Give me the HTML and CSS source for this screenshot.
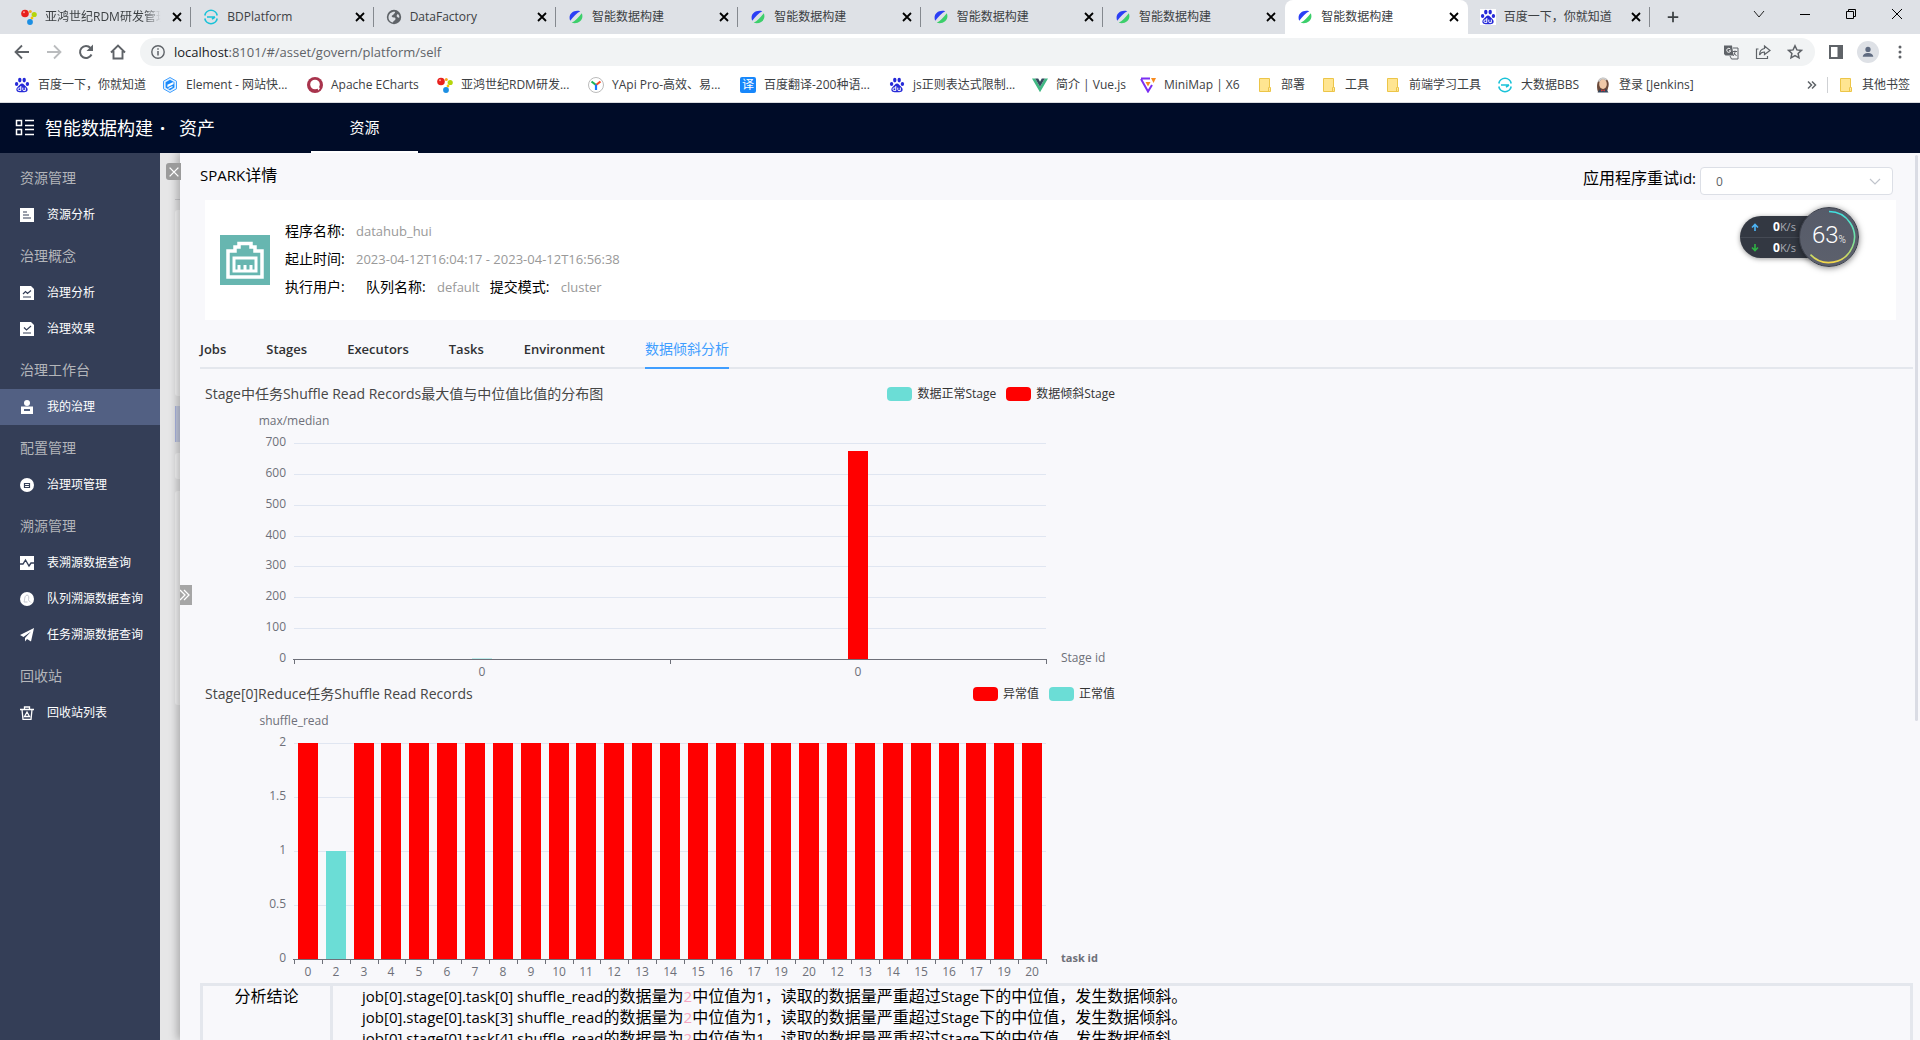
FILE: index.html
```html
<!DOCTYPE html>
<html lang="zh-CN">
<head>
<meta charset="utf-8">
<title>智能数据构建</title>
<link rel="stylesheet" href="styles.css">
</head>
<body>
<svg class="sprite" aria-hidden="true">
  <symbol id="i-close" viewBox="0 0 16 16"><path d="M4 4l8 8M12 4l-8 8" stroke="currentColor" stroke-width="1.800" fill="none"/></symbol>
  <symbol id="i-rdm" viewBox="0 0 16 16"><circle cx="4" cy="4.500" r="3.800" fill="#e8201c"/><circle cx="3" cy="3.300" r="1" fill="#f99"/><circle cx="9.300" cy="2.600" r="1.500" fill="#f5a623"/><circle cx="13.200" cy="5.500" r="2.600" fill="#b5d50b"/><circle cx="11" cy="9" r="1.400" fill="#f5c400"/><circle cx="9" cy="13" r="2.900" fill="#1c8fe3"/></symbol>
  <symbol id="i-bd" viewBox="0 0 16 16"><path d="M1.800 6.500a6.300 6.300 0 0 1 12.400 0M1.800 9.500a6.300 6.300 0 0 0 12.400 0" fill="none" stroke="#19c2d8" stroke-width="1.600"/><path d="M4 8h8M9 10.200L12 8" stroke="#19c2d8" stroke-width="1.600" fill="none"/></symbol>
  <symbol id="i-globe" viewBox="0 0 16 16"><circle cx="8" cy="8" r="7.200" fill="#5f6368"/><path d="M2.500 8.500C2.500 5 5.500 2.500 9 2.800 9.500 4 8 4.500 7.500 5.500S5 6.500 6 7.800s3.500 0 3.500 2-2 1.500-2.500 3.700C4.500 13.300 2.500 11 2.500 8.500zM11.500 5c1.500.5 2 2 1.900 3.500-1.400.5-2.400-.5-2.900-1.500z" fill="#dee1e6"/></symbol>
  <symbol id="i-smart" viewBox="0 0 16 16"><path d="M2.200 11.800C-.5 5 6 .3 12.300 2.300 9 4 5.500 7.500 2.200 11.800z" fill="#2b3ff5"/><path d="M13.800 4.200C16.500 11 10 15.700 3.700 13.700 7 12 10.500 8.500 13.800 4.200z" fill="#3ccf6b"/></symbol>
  <symbol id="i-paw" viewBox="0 0 16 16"><g fill="#2529d8"><ellipse cx="2.600" cy="7" rx="1.700" ry="2.100"/><ellipse cx="5.800" cy="3.100" rx="1.700" ry="2.300"/><ellipse cx="10.200" cy="3.100" rx="1.700" ry="2.300"/><ellipse cx="13.400" cy="7" rx="1.700" ry="2.100"/><path d="M8 6.500c1.700 0 2.300 1.500 3.500 2.600 1.700 1.600 2.500 2.700 2 4.500-.6 2.200-3.400 1.600-5.500 1.600s-4.900.6-5.500-1.600c-.5-1.800.3-2.900 2-4.500C5.700 8 6.300 6.500 8 6.500z"/></g><path d="M6.800 9v4.500H5.200a1.300 1.300 0 010-2.600h1.600M8.800 10.600v2.100q0 .9 1 .9h1.500v-3" stroke="#fff" fill="none"/></symbol>
  <symbol id="i-element" viewBox="0 0 16 16"><path d="M8 .5l6.500 3.700v7.600L8 15.500 1.500 11.800V4.200z" fill="#e1f1ff" stroke="#409eff"/><path d="M8 2.800l4.400 2.500v5.300L8 13.200l-4.400-2.600V5.300z" fill="#1989fa"/><path d="M11.500 5.500L6 8.200v1l5.500-2.700M10.500 9.500L6.500 11.500" stroke="#fff" stroke-width="1.200" fill="none"/></symbol>
  <symbol id="i-echarts" viewBox="0 0 16 16"><circle cx="8" cy="8" r="8" fill="#a8334c"/><circle cx="8" cy="7.500" r="4.800" fill="#fff"/><path d="M8.500 8l3 5.500L13 11z" fill="#fff"/></symbol>
  <symbol id="i-yapi" viewBox="0 0 16 16"><circle cx="8" cy="8" r="7.500" fill="#fff" stroke="#bbb"/><path d="M3.500 4.500L8 8" stroke="#1bb35b" stroke-width="2.200"/><path d="M12.500 4.500L8 8" stroke="#f44c2f" stroke-width="2.200"/><path d="M8 7.500v5.500" stroke="#1677ff" stroke-width="2.200"/></symbol>
  <symbol id="i-vue" viewBox="0 0 16 16"><path d="M0 1.500h3.200L8 9.800l4.800-8.300H16L8 15.300z" fill="#41b883"/><path d="M3.200 1.500h3L8 4.700l1.800-3.200h3L8 9.800z" fill="#34495e"/></symbol>
  <symbol id="i-x6" viewBox="0 0 16 16"><path d="M1 1.500h9M1 2l7 12.500L12 8" stroke="#7b2ff2" stroke-width="2" fill="none"/><path d="M5.500 5h5L8 9.500z" fill="#f78b1f"/><path d="M11 1h5l-2.500 5z" fill="#f78b1f"/></symbol>
  <symbol id="i-folder" viewBox="0 0 16 16"><path d="M2.500 1.500h10v9h1v4h-11zM12.500 10.500h-1v4" fill="#ffe591" stroke="#ecc548"/></symbol>
  <symbol id="i-jenkins" viewBox="0 0 16 16"><path d="M3 15c-2-6-1-14 5-14 5 0 7 5 5 10l-1 4z" fill="#6b4a3a"/><ellipse cx="8" cy="7" rx="3.800" ry="5" fill="#f0c9a8"/><path d="M3.500 4.500Q7-1 11.500 3" stroke="#ccc" stroke-width="2" fill="none"/><path d="M2.500 15.500L5 12l3 1.500 3-1.500 2.500 3.500z" fill="#34475c"/><path d="M6 12.500l4 2v-2l-4 2z" fill="#d33"/></symbol>
</svg>

<header class="browser">
  <div class="tabstrip">
    <nav class="tabs" aria-label="标签页">
      <div class="tab"><svg class="fav"><use href="#i-rdm"/></svg><span class="tab-title fade">亚鸿世纪RDM研发管理系统</span><button class="tab-x" aria-label="关闭"><svg><use href="#i-close"/></svg></button></div>
      <div class="tab"><svg class="fav"><use href="#i-bd"/></svg><span class="tab-title">BDPlatform</span><button class="tab-x" aria-label="关闭"><svg><use href="#i-close"/></svg></button></div>
      <div class="tab"><svg class="fav"><use href="#i-globe"/></svg><span class="tab-title">DataFactory</span><button class="tab-x" aria-label="关闭"><svg><use href="#i-close"/></svg></button></div>
      <div class="tab"><svg class="fav"><use href="#i-smart"/></svg><span class="tab-title">智能数据构建</span><button class="tab-x" aria-label="关闭"><svg><use href="#i-close"/></svg></button></div>
      <div class="tab"><svg class="fav"><use href="#i-smart"/></svg><span class="tab-title">智能数据构建</span><button class="tab-x" aria-label="关闭"><svg><use href="#i-close"/></svg></button></div>
      <div class="tab"><svg class="fav"><use href="#i-smart"/></svg><span class="tab-title">智能数据构建</span><button class="tab-x" aria-label="关闭"><svg><use href="#i-close"/></svg></button></div>
      <div class="tab before-active"><svg class="fav"><use href="#i-smart"/></svg><span class="tab-title">智能数据构建</span><button class="tab-x" aria-label="关闭"><svg><use href="#i-close"/></svg></button></div>
      <div class="tab active"><svg class="fav"><use href="#i-smart"/></svg><span class="tab-title">智能数据构建</span><button class="tab-x" aria-label="关闭"><svg><use href="#i-close"/></svg></button></div>
      <div class="tab"><svg class="fav white"><use href="#i-paw"/></svg><span class="tab-title">百度一下，你就知道</span><button class="tab-x" aria-label="关闭"><svg><use href="#i-close"/></svg></button></div>
    </nav>
    <button class="new-tab" aria-label="新标签页"><svg viewBox="0 0 16 16"><path d="M8 2v12M2 8h12" stroke="#3c4043" stroke-width="2"/></svg></button>
    <div class="window-buttons">
      <button aria-label="搜索标签页"><svg viewBox="0 0 12 12"><path d="M1 3l5 6 5-6" stroke="#222" fill="none"/></svg></button>
      <button aria-label="最小化"><svg viewBox="0 0 12 12"><path d="M1 6.500h10" stroke="#000"/></svg></button>
      <button aria-label="还原"><svg viewBox="0 0 12 12"><path d="M1.500 3.500h7v7h-7zM3.500 3.500v-2h7v7h-2" stroke="#000" fill="none"/></svg></button>
      <button aria-label="关闭窗口"><svg viewBox="0 0 12 12"><path d="M1 1l10 10M11 1L1 11" stroke="#000" fill="none"/></svg></button>
    </div>
  </div>
  <div class="toolbar">
    <button aria-label="后退"><svg viewBox="0 0 16 16"><path d="M15 8H2M8 1.500L1.500 8 8 14.500" stroke="#5f6368" stroke-width="1.800" fill="none"/></svg></button>
    <button aria-label="前进"><svg viewBox="0 0 16 16"><path d="M1 8h13M8 1.500L14.500 8 8 14.500" stroke="#babcbe" stroke-width="1.800" fill="none"/></svg></button>
    <button aria-label="重新加载"><svg viewBox="0 0 16 16"><path d="M13.500 10.500A6 6 0 1 1 12.500 4" stroke="#5f6368" stroke-width="2" fill="none"/><path d="M15 .5v6.500H8.500z" fill="#5f6368"/></svg></button>
    <button aria-label="主页"><svg viewBox="0 0 16 16"><path d="M3.500 7v7.500h9V7M1 8.500L8 1.500l7 7" stroke="#5f6368" stroke-width="1.900" fill="none"/></svg></button>
    <div class="omnibox">
      <svg class="s14" viewBox="0 0 14 14"><circle cx="7" cy="7" r="6.200" stroke="#5f6368" stroke-width="1.400" fill="none"/><path d="M7 6v4.500M7 3.300v1.500" stroke="#5f6368" stroke-width="1.500"/></svg>
      <span class="url">localhost<span>:8101/#/asset/govern/platform/self</span></span>
      <button aria-label="翻译"><svg viewBox="0 0 16 16"><path d="M1 1.500h8l1.500 10H2.500L1 10z" fill="#5f6368"/><path d="M10 4h5v11H8.500L7 12M10 7.500h4M12 6.500v1c0 2-1 3.500-2 4.500M11 9l2.500 3" stroke="#5f6368" fill="none"/><path d="M7.500 5.300A2 2 0 1 0 7.700 6.800H6" stroke="#fff" fill="none"/></svg></button>
      <button aria-label="分享"><svg viewBox="0 0 16 16"><path d="M3.500 5H1.500v9.500h11V12" stroke="#5f6368" stroke-width="1.200" fill="none"/><path d="M9.500 2l5.500 4.500-5.500 4V8C7 8 5.500 9 4.500 11c0-3.500 2-6 5-6.500z" stroke="#5f6368" stroke-width="1.200" fill="none"/></svg></button>
      <button aria-label="收藏"><svg viewBox="0 0 16 16"><path d="M8 1.800l1.900 4.100 4.500.5-3.300 3 .9 4.400L8 11.600l-4 2.200.9-4.400-3.300-3 4.500-.5z" stroke="#5f6368" stroke-width="1.500" fill="none"/></svg></button>
    </div>
    <button aria-label="侧边栏"><svg viewBox="0 0 16 16"><path d="M2 2h12v12H2z" stroke="#5f6368" stroke-width="2" fill="none"/><path d="M9.500 2H14v12H9.500z" fill="#5f6368"/></svg></button>
    <button class="avatar" aria-label="用户"><svg viewBox="0 0 16 16"><circle cx="8" cy="5" r="3" fill="#5f6b80"/><path d="M2 13.500c0-6 12-6 12 0z" fill="#5f6b80"/></svg></button>
    <button aria-label="菜单"><svg viewBox="0 0 16 16"><circle cx="8" cy="3" r="1.500" fill="#5f6368"/><circle cx="8" cy="8" r="1.500" fill="#5f6368"/><circle cx="8" cy="13" r="1.500" fill="#5f6368"/></svg></button>
  </div>
  <nav class="bookmarks" aria-label="书签">
    <div class="marks">
      <a href="#"><svg><use href="#i-paw"/></svg><span>百度一下，你就知道</span></a>
      <a href="#"><svg><use href="#i-element"/></svg><span>Element - 网站快...</span></a>
      <a href="#"><svg><use href="#i-echarts"/></svg><span>Apache ECharts</span></a>
      <a href="#"><svg><use href="#i-rdm"/></svg><span>亚鸿世纪RDM研发...</span></a>
      <a href="#"><svg><use href="#i-yapi"/></svg><span>YApi Pro-高效、易...</span></a>
      <a href="#"><i class="yi">译</i><span>百度翻译-200种语...</span></a>
      <a href="#"><svg><use href="#i-paw"/></svg><span>js正则表达式限制...</span></a>
      <a href="#"><svg><use href="#i-vue"/></svg><span>简介 | Vue.js</span></a>
      <a href="#"><svg><use href="#i-x6"/></svg><span>MiniMap | X6</span></a>
      <a href="#"><svg><use href="#i-folder"/></svg><span>部署</span></a>
      <a href="#"><svg><use href="#i-folder"/></svg><span>工具</span></a>
      <a href="#"><svg><use href="#i-folder"/></svg><span>前端学习工具</span></a>
      <a href="#"><svg><use href="#i-bd"/></svg><span>大数据BBS</span></a>
      <a href="#"><svg><use href="#i-jenkins"/></svg><span>登录 [Jenkins]</span></a>
    </div>
    <button class="more" aria-label="更多书签"><svg viewBox="0 0 10 10"><path d="M1 1.500L4.500 5 1 8.500M5 1.500L8.500 5 5 8.500" stroke="#5f6368" stroke-width="1.500" fill="none"/></svg></button>
    <a class="other" href="#"><svg><use href="#i-folder"/></svg><span>其他书签</span></a>
  </nav>
</header>

<header class="app-header">
  <svg class="menu-icon" viewBox="0 0 20 18"><path d="M1.500 1.500h5v5h-5zM1.500 10.500h5v5h-5zM10 1.500h9M10 6.500h9M10 10.500h9M10 15.500h9" stroke="#fff" stroke-width="1.500" fill="none"/></svg>
  <h1>智能数据构建<b>·</b>资产</h1>
  <a class="top-link" href="#">资源</a>
</header>

<div class="body">
  <nav class="sidebar" aria-label="主菜单">
    <h2>资源管理</h2>
    <a href="#"><svg viewBox="0 0 14 14"><path d="M0 0h14v14H0z" fill="#fff"/><path d="M3 4h4M3 7h6M3 10h8" stroke="#343e57" stroke-width="1.200"/></svg>资源分析</a>
    <h2>治理概念</h2>
    <a href="#"><svg viewBox="0 0 14 14"><path d="M0 0h11l3 3v11H0z" fill="#fff"/><path d="M3 8l2.500-2.500 2 2L11 4.500M3 11h8" stroke="#343e57" stroke-width="1.200" fill="none"/></svg>治理分析</a>
    <a href="#"><svg viewBox="0 0 14 14"><path d="M0 0h11l3 3v11H0z" fill="#fff"/><path d="M4 5.500L6.500 8 11 4M3 11h8" stroke="#343e57" stroke-width="1.200" fill="none"/></svg>治理效果</a>
    <h2>治理工作台</h2>
    <a class="current" href="#"><svg viewBox="0 0 14 14"><circle cx="7" cy="3" r="3" fill="#fff"/><path d="M1 6.500h12V14H1z" fill="#fff"/><path d="M4 9h6v2H4z" fill="#526080"/></svg>我的治理</a>
    <h2>配置管理</h2>
    <a href="#"><svg viewBox="0 0 14 14"><circle cx="7" cy="7" r="7" fill="#fff"/><path d="M4.500 5.500h5v4h-5zM4.500 7.500h5" stroke="#343e57" stroke-width="1.200" fill="none"/></svg>治理项管理</a>
    <h2>溯源管理</h2>
    <a href="#"><svg viewBox="0 0 14 14"><path d="M0 0h14v14H0z" fill="#fff"/><path d="M0 8h3l2.500-4 3.500 6 2-3h3" stroke="#343e57" stroke-width="1.400" fill="none"/></svg>表溯源数据查询</a>
    <a href="#"><svg viewBox="0 0 14 14"><circle cx="7" cy="7" r="7" fill="#fff"/><path d="M4 10c1-2 0-6 3-7 2 0 2 3 1.500 4.500S10 9 11 10.500M4 10h3.500" stroke="#c3c6cf" fill="none"/></svg>队列溯源数据查询</a>
    <a href="#"><svg viewBox="0 0 14 14"><path d="M14 0L0 7l3.500 2L11 3.500 5 10v3.500l2-2.500 4 2.500z" fill="#fff"/></svg>任务溯源数据查询</a>
    <h2>回收站</h2>
    <a href="#"><svg viewBox="0 0 14 14"><path d="M4.500 3V1h5v2M0 3.500h14M2 3.500l1 10h8l1-10M7 6l2.500 4.500h-5z" stroke="#fff" stroke-width="1.300" fill="none"/></svg>回收站列表</a>
  </nav>

  <div class="backdrop" aria-hidden="true"><i class="rule"></i><i class="sheet tall"></i><i class="pick"></i><i class="sheet row"></i><i class="sheet rest"></i></div>

  <main class="drawer">
    <button class="drawer-close" aria-label="关闭详情"><svg viewBox="0 0 16 16"><path d="M3 3l10 10M13 3L3 13" stroke="#fff" stroke-width="1.600"/></svg></button>
    <button class="drawer-fold" aria-label="收起"><svg viewBox="0 0 12 14"><path d="M0 2l5 5-5 5M4 2l5 5-5 5" stroke="#fff" stroke-width="1.300" fill="none"/></svg></button>
    <i class="scroll-thumb"></i>

    <div class="title-row">
      <h2><span class="en">SPARK</span>详情</h2>
      <label for="attempt">应用程序重试<span class="en">id:</span></label>
      <div class="select"><select id="attempt"><option>0</option></select><svg viewBox="0 0 12 8"><path d="M1 1l5 5 5-5" stroke="#c0c4cc" stroke-width="1.200" fill="none"/></svg></div>
    </div>

    <section class="summary">
      <svg class="port" viewBox="0 0 50 50"><path d="M0 0h50v50H0z" fill="#67b6b0"/><path d="M8 42V16h7v-4h4V8.500h12V12h4v4h7v26z" stroke="#fff" stroke-width="3.500" fill="none"/><path d="M14 23h22v13H14z" stroke="#fff" stroke-width="3" fill="none"/><path d="M19 35v-5M25 35v-5M31 35v-5" stroke="#fff" stroke-width="3"/></svg>
      <dl>
        <div><dt>程序名称:</dt><dd>datahub_hui</dd></div>
        <div><dt>起止时间:</dt><dd>2023-04-12T16:04:17 - 2023-04-12T16:56:38</dd></div>
        <div><dt>执行用户:</dt><dd></dd><dt>队列名称:</dt><dd>default</dd><dt>提交模式:</dt><dd>cluster</dd></div>
      </dl>
    </section>

    <nav class="detail-tabs" aria-label="详情">
      <a href="#">Jobs</a><a href="#">Stages</a><a href="#">Executors</a><a href="#">Tasks</a><a href="#">Environment</a><a class="on" href="#">数据倾斜分析</a>
    </nav>

    <figure class="chart">
      <figcaption>
        <h3>Stage中任务Shuffle Read Records最大值与中位值比值的分布图</h3>
        <span class="key teal">数据正常Stage</span><span class="key red">数据倾斜Stage</span>
      </figcaption>
      <svg id="stage-chart" viewBox="0 0 920 270"></svg>
    </figure>
    <figure class="chart">
      <figcaption>
        <h3>Stage[0]Reduce任务Shuffle Read Records</h3>
        <span class="key red">异常值</span><span class="key teal">正常值</span>
      </figcaption>
      <svg id="task-chart" viewBox="0 0 920 270"></svg>
    </figure>

    <table class="conclusion">
      <tr>
        <th scope="row">分析结论</th>
        <td>
          <p><span class="en">job[0].stage[0].task[0] shuffle_read</span>的数据量为<em>2</em>中位值为<span class="en">1</span>，读取的数据量严重超过<span class="en">Stage</span>下的中位值，发生数据倾斜。</p>
          <p><span class="en">job[0].stage[0].task[3] shuffle_read</span>的数据量为<em>2</em>中位值为<span class="en">1</span>，读取的数据量严重超过<span class="en">Stage</span>下的中位值，发生数据倾斜。</p>
          <p><span class="en">job[0].stage[0].task[4] shuffle_read</span>的数据量为<em>2</em>中位值为<span class="en">1</span>，读取的数据量严重超过<span class="en">Stage</span>下的中位值，发生数据倾斜。</p>
        </td>
      </tr>
    </table>
  </main>
</div>

<aside class="meter" aria-label="网速">
  <div class="speeds">
    <div><svg viewBox="0 0 8 8"><path d="M4 8V1.500M1 4.500l3-3 3 3" stroke="#4db4f5" stroke-width="1.600" fill="none"/></svg><b>0</b><span>K/s</span></div>
    <div><svg viewBox="0 0 8 8"><path d="M4 0v6.500M1 3.500l3 3 3-3" stroke="#2fb344" stroke-width="1.600" fill="none"/></svg><b>0</b><span>K/s</span></div>
  </div>
  <div class="dial">
    <svg viewBox="0 0 60 60"><defs><linearGradient id="arc" x1="0" y1="0" x2="0" y2="1"><stop offset="0" stop-color="#3fe0e0"/><stop offset=".6" stop-color="#7be39a"/><stop offset="1" stop-color="#f3d64a"/></linearGradient></defs><path d="M30 4.500A25.500 25.500 0 1 1 11.500 47.600" stroke="url(#arc)" stroke-width="1.600" fill="none"/></svg>
    <span>63<small>%</small></span>
  </div>
</aside>
<script src="charts.js"></script>
</body>
</html>
```
FILE: charts.js
```js
const NS = 'http://www.w3.org/2000/svg';
const LEFT = 94, RIGHT = 846, TOP = 34, BASE = 250;

function add(svg, name, attrs, text) {
  const node = document.createElementNS(NS, name);
  for (const key in attrs) node.setAttribute(key, attrs[key]);
  if (text !== undefined) node.textContent = text;
  svg.appendChild(node);
}

function draw(id, chart) {
  const svg = document.getElementById(id);
  const max = chart.ticks[chart.ticks.length - 1];
  const toY = v => Math.round(BASE - (BASE - TOP) * v / max);
  const step = (RIGHT - LEFT) / chart.bars.length;
  add(svg, 'text', { x: LEFT, y: 16, class: 'mid' }, chart.yName);
  for (const t of chart.ticks) {
    const y = toY(t);
    if (t) add(svg, 'rect', { x: LEFT, y, width: RIGHT - LEFT, height: 1, class: 'grid' });
    add(svg, 'text', { x: 86, y: y + 3, class: 'end' }, t);
  }
  chart.bars.forEach((bar, i) => {
    const mid = LEFT + step * (i + 0.5);
    const y = Math.min(toY(bar.value), BASE - 1);
    add(svg, 'rect', { x: Math.round(mid - 10), y, width: 20, height: BASE - y, class: bar.kind });
    add(svg, 'text', { x: Math.round(mid), y: 267, class: 'mid' }, bar.label);
  });
  add(svg, 'rect', { x: LEFT - 1, y: BASE, width: RIGHT - LEFT + 2, height: 1, class: 'axis' });
  for (let i = 0; i <= chart.bars.length; i++) {
    add(svg, 'rect', { x: Math.round(LEFT + step * i), y: BASE, width: 1, height: 5, class: 'axis' });
  }
  add(svg, 'text', { x: 861, y: 253, class: chart.strong ? 'name strong' : 'name' }, chart.xName);
}

draw('stage-chart', {
  yName: 'max/median', xName: 'Stage id',
  ticks: [0, 100, 200, 300, 400, 500, 600, 700],
  bars: [{ label: 0, value: 1, kind: 'normal faint' }, { label: 0, value: 674, kind: 'skewed' }]
});

const tasks = [0, 2, 3, 4, 5, 6, 7, 8, 9, 10, 11, 12, 13, 14, 15, 16, 17, 19, 20, 12, 13, 14, 15, 16, 17, 19, 20];
draw('task-chart', {
  yName: 'shuffle_read', xName: 'task id', strong: true,
  ticks: [0, 0.5, 1, 1.5, 2],
  bars: tasks.map(t => t === 2 ? { label: t, value: 1, kind: 'normal' } : { label: t, value: 2, kind: 'skewed' })
});
```
FILE: styles.css
```css
* { box-sizing: border-box; margin: 0; padding: 0; }
html, body { height: 100%; }
body {
  display: flex;
  flex-direction: column;
  overflow: hidden;
  font: 12px/16px "Open Sans", "Noto Sans CJK SC", sans-serif;
  color: #000;
}
button { border: 0; background: none; display: flex; align-items: center; justify-content: center; font: inherit; }
a { color: inherit; text-decoration: none; }
svg { width: 16px; height: 16px; flex: none; display: block; }
.sprite { position: absolute; width: 0; height: 0; }

/* browser window */
.browser { flex: none; background: #fff; border-bottom: 1px solid #dadce0; color: #3c4043; }
.tabstrip { display: flex; height: 34px; background: #dee1e6; }
.tabs { display: flex; flex: 1; min-width: 0; padding-left: 9px; }
.tab { display: flex; flex: 1; min-width: 0; align-items: center; gap: 8px; padding: 0 6px 0 12px; position: relative; }
.tab::after { content: ""; position: absolute; right: 0; top: 7px; width: 1px; height: 20px; background: #85898f; }
.tab.active::after, .tab.before-active::after { display: none; }
.tab.active { background: #fff; border-radius: 8px 8px 0 0; }
.tab-title { flex: 1; min-width: 0; overflow: hidden; white-space: nowrap; }
.tab-title.fade { -webkit-mask-image: linear-gradient(90deg, #000 85%, transparent); mask-image: linear-gradient(90deg, #000 85%, transparent); }
.fav.white { background: #fff; }
.new-tab { width: 46px; }
.new-tab svg { width: 14px; height: 14px; }
.window-buttons { display: flex; width: 224px; height: 28px; padding-left: 40px; }
.window-buttons button { flex: 1; }
.window-buttons svg { width: 12px; height: 12px; }

.toolbar { display: flex; align-items: center; height: 36px; padding: 0 4px 0 6px; }
.toolbar > button { width: 32px; height: 28px; }
.toolbar > .avatar { background: #dee1e6; border-radius: 50%; width: 22px; height: 22px; margin: 0 5px; }
.avatar svg { width: 14px; height: 14px; }
.omnibox { display: flex; flex: 1; align-items: center; gap: 9px; height: 28px; margin: 0 5px 0 6px; padding: 0 9px 0 11px; border-radius: 14px; background: #f1f3f4; }
.omnibox button { width: 23px; height: 28px; }
.s14 { width: 14px; height: 14px; }
.url { flex: 1; font-size: 13px; color: #202124; }
.url span { color: #5f6368; }

.bookmarks { display: flex; align-items: center; height: 32px; padding: 0 10px 2px 14px; white-space: nowrap; }
.marks { flex: 1; display: grid; grid-template-columns: 148px 145px 130px 151px 152px 149px 143px 108px 117px 64px 64px 112px 98px 110px; }
.bookmarks a { display: flex; align-items: center; gap: 8px; }
.yi { width: 16px; background: #1787fb; color: #fff; border-radius: 2px; font-style: normal; text-align: center; }
.more { width: 26px; padding-right: 3px; height: 20px; }
.more svg { width: 10px; height: 10px; }
.other { border-left: 1px solid #cfd1d4; padding-left: 10px; }

/* application header */
.app-header { flex: none; display: flex; align-items: center; height: 50px; padding-left: 15px; background: #000c28; color: #fff; }
.menu-icon { width: 20px; height: 18px; }
.app-header h1 { width: 266px; margin-left: 10px; font-size: 18px; line-height: 24px; font-weight: 400; }
.app-header h1 b { display: inline-block; width: 26px; padding-left: 7px; }
.top-link { width: 107px; height: 50px; line-height: 48px; text-align: center; font-size: 15px; border-bottom: 2px solid #fff; }

.body { flex: 1; min-height: 0; display: flex; }

.sidebar { flex: none; width: 160px; padding-top: 2px; background: #343e57; }
.sidebar h2 { height: 36px; margin-top: 6px; padding-left: 20px; font-size: 14px; line-height: 34px; font-weight: 400; color: #b3b5ba; }
.sidebar a { display: flex; align-items: center; gap: 13px; height: 36px; padding-left: 20px; color: #fff; white-space: nowrap; }
.sidebar svg { width: 14px; height: 14px; }
.sidebar .current { background: #526083; }

.backdrop { flex: none; width: 20px; padding: 46px 0 0 15px; background: #e6e6e7; }
.backdrop i { display: block; }
.rule { height: 1px; background: #c9c9cc; }
.sheet { background: #f4f4f5; border-radius: 3px 0 0 3px; }
.tall { height: 186px; margin-top: 10px; }
.pick { height: 36px; margin-top: 10px; background: #c5cbe0; border-left: 1px solid #aab4e0; }
.row { height: 26px; margin-top: 11px; }
.rest { height: 214px; margin-top: 12px; }

/* detail drawer */
.drawer { flex: 1; min-width: 0; position: relative; padding: 0 7px 0 20px; background: #f8f8fb; box-shadow: -3px 0 8px rgba(0, 0, 0, .25); clip-path: inset(0 0 0 -20px); }
.drawer-close { position: absolute; left: -14px; top: 10px; width: 15px; height: 17px; border-radius: 3px 0 0 3px; background: #9b9b9b; }
.drawer-close svg { width: 14px; height: 14px; }
.drawer-fold { position: absolute; left: 0; top: 432px; width: 12px; height: 20px; background: #a6a6a6; }
.drawer-fold svg { width: 12px; height: 14px; }
.scroll-thumb { position: absolute; right: 2px; top: 2px; width: 3px; height: 566px; border-radius: 2px; background: #dadce4; }

.title-row { display: flex; height: 47px; padding: 11px 20px 0 0; align-items: flex-start; font-size: 16px; line-height: 22px; }
.title-row .en { font-size: 15px; }
.title-row h2 { flex: 1; font-size: 16px; font-weight: 400; }
.title-row label { margin: 3px 4px 0 0; }
.select { position: relative; width: 193px; margin-top: 3px; }
.select select { appearance: none; width: 100%; height: 28px; padding: 0 15px; border: 1px solid #dcdfe6; border-radius: 4px; background: #fff; color: #606266; font: 12px "Open Sans", sans-serif; }
.select svg { position: absolute; right: 12px; top: 11px; width: 12px; height: 8px; }

.summary { display: flex; align-items: center; gap: 15px; height: 120px; margin: 0 17px 0 5px; padding: 0 15px; background: #fff; font-size: 14px; line-height: 26px; }
.port { width: 50px; height: 50px; }
.summary dl > div { display: flex; height: 28px; }
.summary dt { width: 59px; margin-right: 12px; white-space: nowrap; }
.summary dd { margin-right: 10px; font-size: 13px; color: #999; }

.detail-tabs { display: flex; gap: 40px; margin-top: 9px; height: 40px; box-shadow: inset 0 -2px #e4e7ed; font-size: 13px; line-height: 40px; font-weight: 600; color: #303133; }
.detail-tabs .on { font-size: 14px; font-weight: 400; color: #409eff; border-bottom: 2px solid #409eff; }

.chart { width: 920px; }
.detail-tabs + .chart { margin-top: 10px; }
.chart figcaption { display: flex; align-items: center; height: 30px; padding: 0 5px; gap: 10px; color: #333; }
.chart h3 { flex: 1; font-size: 14px; font-weight: 400; color: #464646; }
.key { display: flex; align-items: center; }
.key::before { content: ""; width: 25px; height: 14px; margin-right: 5px; border-radius: 4px; }
.red::before { background: #f00; }
.teal::before { background: #6bddd6; }
.chart svg { width: 100%; height: 270px; font-size: 12px; fill: #6e7079; }
.chart .mid { text-anchor: middle; }
.chart .end { text-anchor: end; }
.chart .strong { font-size: 11px; font-weight: 700; }
.grid { fill: #e0e6f1; }
.axis { fill: #6e7079; }
.normal { fill: #6bddd6; }
.faint { opacity: .4; }
.skewed { fill: #f00; }

.conclusion { width: 100%; margin-top: 4px; border-collapse: collapse; font-size: 16px; line-height: 21px; }
.conclusion th, .conclusion td { border: 3px solid #e4e7ed; vertical-align: top; text-align: left; }
.conclusion th { width: 130px; font-weight: 400; text-align: center; }
.conclusion td { padding-left: 29px; }
.conclusion p { height: 21px; }
.conclusion .en, .conclusion em { font-size: 15px; }
.conclusion em { font-style: normal; color: #f3a6c0; }

/* floating network meter */
.meter { position: absolute; right: 61px; top: 207px; display: flex; align-items: center; color: #fff; }
.speeds { width: 79px; height: 42px; margin-right: -20px; border-radius: 21px 0 0 21px; background: #333842; box-shadow: 0 1px 5px rgba(0, 0, 0, .4); }
.speeds div { display: flex; align-items: center; height: 21px; padding-left: 11px; font-size: 12px; }
.speeds div + div { border-top: 1px solid #454a54; }
.speeds svg { width: 8px; height: 8px; margin-right: 14px; }
.speeds span { font-size: 11px; color: #a7abb3; }
.dial { position: relative; display: flex; align-items: center; justify-content: center; width: 60px; height: 60px; border-radius: 50%; background: linear-gradient(#565b69, #5c606c); border: 1px solid #3c404b; box-shadow: 0 1px 6px rgba(0, 0, 0, .5); font: 300 24px/28px Roboto, sans-serif; }
.dial svg { position: absolute; left: -1px; top: -1px; width: 60px; height: 60px; }
.dial small { font-size: 10px; }
```
